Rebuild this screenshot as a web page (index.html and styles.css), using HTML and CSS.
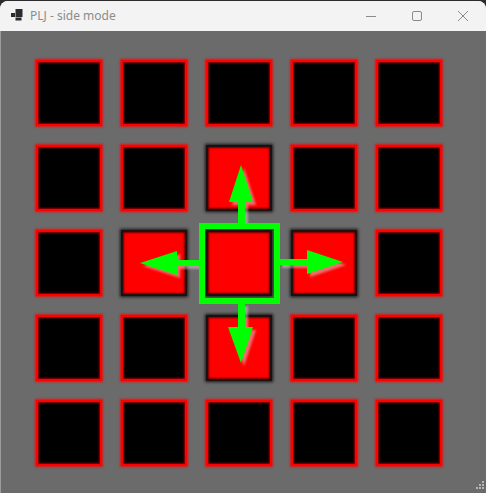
FILE: index.html
```html
<!DOCTYPE html>
<html>
<head>
<meta charset="utf-8">
<link rel="stylesheet" href="styles.css">
</head>
<body>
<div class="window">
  <div class="titlebar">
    <svg class="appicon" width="14" height="14" viewBox="0 0 14 14">
      <rect x="0" y="4" width="4" height="4" fill="#2b2b2b"/>
      <rect x="4.5" y="0" width="7" height="8" fill="#2b2b2b"/>
      <rect x="4.5" y="8.5" width="6" height="3" fill="#2b2b2b"/>
    </svg>
    <span class="title">PLJ - side mode</span>
    <div class="controls">
      <svg class="ctl" width="46" height="30" viewBox="0 0 46 30"><line x1="18" y1="15.5" x2="28" y2="15.5" stroke="#8a8a8a" stroke-width="1"/></svg>
      <svg class="ctl" width="46" height="30" viewBox="0 0 46 30"><rect x="18.5" y="10.5" width="9" height="9" rx="1.5" fill="none" stroke="#8a8a8a" stroke-width="1"/></svg>
      <svg class="ctl" width="46" height="30" viewBox="0 0 46 30"><path d="M18 10 L28 20 M28 10 L18 20" stroke="#8a8a8a" stroke-width="1"/></svg>
    </div>
  </div>
  <div class="content">
    <div class="grid">
      <div class="cell off"></div><div class="cell off"></div><div class="cell off"></div><div class="cell off"></div><div class="cell off"></div>
      <div class="cell off"></div><div class="cell off"></div><div class="cell on"></div><div class="cell off"></div><div class="cell off"></div>
      <div class="cell off"></div><div class="cell on"></div><div class="cell on"></div><div class="cell on"></div><div class="cell off"></div>
      <div class="cell off"></div><div class="cell off"></div><div class="cell on"></div><div class="cell off"></div><div class="cell off"></div>
      <div class="cell off"></div><div class="cell off"></div><div class="cell off"></div><div class="cell off"></div><div class="cell off"></div>
    </div>
    <svg class="grip" width="12" height="10" viewBox="0 0 12 10">
      <rect x="9" y="0" width="2" height="2" fill="#b5b5b5"/>
      <rect x="6" y="3" width="2" height="2" fill="#b5b5b5"/>
      <rect x="9" y="3" width="2" height="2" fill="#b5b5b5"/>
      <rect x="3" y="6" width="2" height="2" fill="#b5b5b5"/>
      <rect x="6" y="6" width="2" height="2" fill="#b5b5b5"/>
      <rect x="9" y="6" width="2" height="2" fill="#b5b5b5"/>
    </svg>
  </div>
  <svg class="overlay" width="486" height="493" viewBox="0 0 486 493">
    <g class="arrows">
      <rect x="238" y="200" width="7" height="24" fill="#00ff00"/>
      <polygon points="229,202 253,202 241,165" fill="#00ff00"/>
      <rect x="176" y="260" width="24" height="6" fill="#00ff00"/>
      <polygon points="177,251 177,275 140,263" fill="#00ff00"/>
      <rect x="279" y="259" width="29" height="6" fill="#00ff00"/>
      <polygon points="307,250 307,274 343,262" fill="#00ff00"/>
      <rect x="238" y="303" width="7" height="25" fill="#00ff00"/>
      <polygon points="228,327 253,327 241,363" fill="#00ff00"/>
    </g>
    <rect x="202" y="226" width="75" height="75" fill="none" stroke="#00ff00" stroke-width="6"/>
  </svg>
</div>
</body>
</html>
```
FILE: styles.css
```css
html, body {
  margin: 0;
  padding: 0;
  background: #2c2c2c;
  width: 486px;
  height: 493px;
  overflow: hidden;
}
.window {
  position: relative;
  margin-top: 1px;
  width: 486px;
  height: 492px;
  border-radius: 8px 8px 0 0;
  overflow: hidden;
  background: #f3f3f3;
  display: flex;
  flex-direction: column;
}
.titlebar {
  height: 30px;
  flex: none;
  display: flex;
  align-items: center;
  background: #f3f3f3;
  font-family: "Noto Sans", "Open Sans", sans-serif;
}
.appicon {
  margin-left: 11px;
  margin-top: -1px;
}
.title {
  margin-left: 5px;
  font-size: 12px;
  color: #8b8b8b;
  margin-top: -1px;
}
.controls {
  margin-left: auto;
  display: flex;
}
.ctl {
  display: block;
}
.content {
  flex: 1;
  background: #6b6b6b;
  border-left: 1px solid #9c9c9c;
  position: relative;
  padding: 29px 0 0 35px;
}
.grid {
  display: grid;
  grid-template-columns: repeat(5, 66px);
  grid-auto-rows: 66px;
  column-gap: 19px;
  row-gap: 19px;
}
.cell {
  box-sizing: border-box;
}
.cell.off {
  background: #000;
  border: 2px solid #ff0000;
  box-shadow: 0 0 2px 1px rgba(255, 0, 0, 0.9), inset 0 0 2px 1px rgba(220, 0, 0, 0.7);
}
.cell.on {
  background: #f00;
  border: 2px solid #1e1010;
  box-shadow: 0 0 3px 1px rgba(0, 0, 0, 0.8), inset 0 0 2px 1px rgba(0, 0, 0, 0.6);
}
.grip {
  position: absolute;
  right: 1px;
  bottom: 2px;
}
.overlay {
  position: absolute;
  left: 0;
  top: -1px;
}
.arrows {
  filter: drop-shadow(3px 3px 1px rgba(220, 200, 200, 0.55));
}
```
